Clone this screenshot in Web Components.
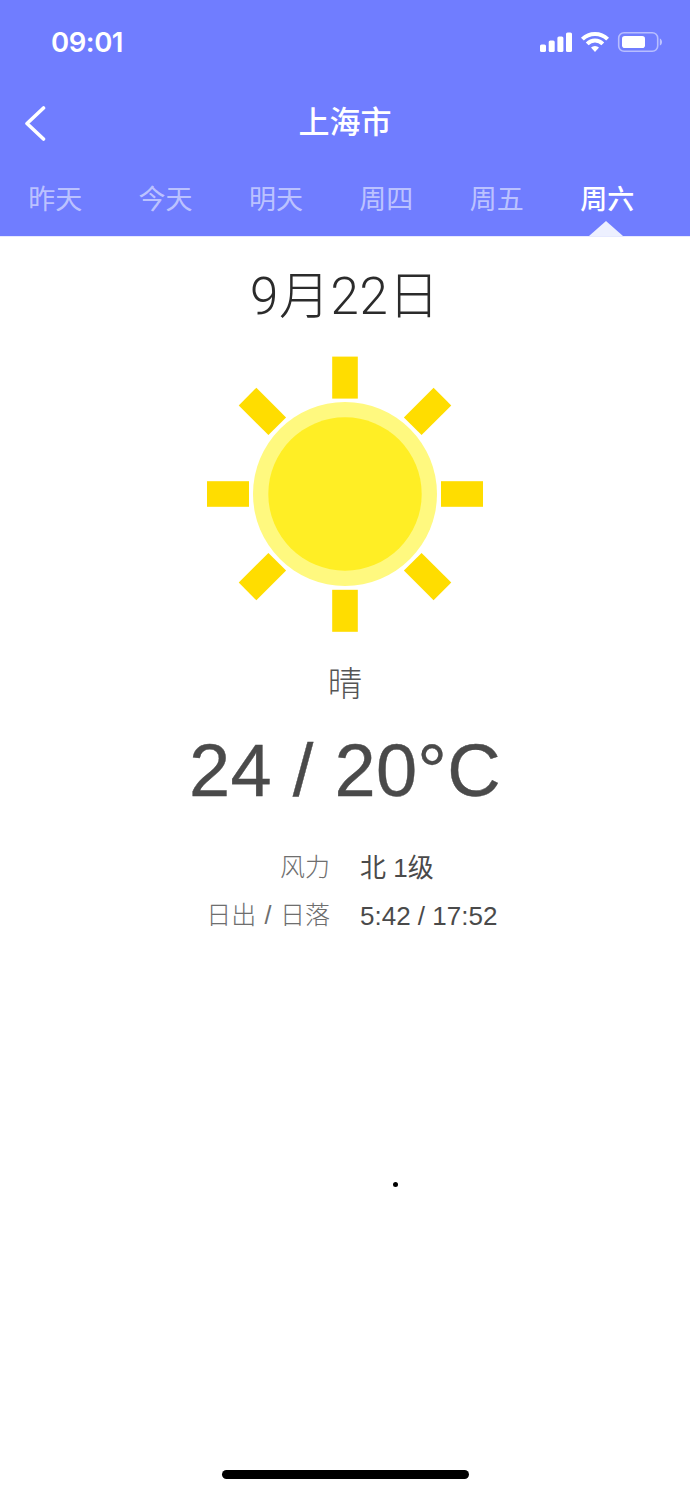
<!DOCTYPE html>
<html lang="zh"><head><meta charset="utf-8"><title>上海市</title>
<style>
html,body{margin:0;padding:0;background:#fff}
body{width:690px;height:1494px;overflow:hidden;font-family:"Liberation Sans","Noto Sans CJK SC",sans-serif}
</style></head>
<body>
<weather-screen>
  <weather-header city="上海市" slot="header">
    <day-tab>昨天</day-tab><day-tab>今天</day-tab><day-tab>明天</day-tab><day-tab>周四</day-tab><day-tab>周五</day-tab><day-tab active>周六</day-tab>
  </weather-header>
  <day-detail date="9月22日" cond="晴" temp="24 / 20°C">
    <detail-row label="风力" value="北 1级"></detail-row>
    <detail-row label="日出 / 日落" value="5:42 / 17:52"></detail-row>
  </day-detail>
</weather-screen>
<script>
function def(name, html, init){
  customElements.define(name, class extends HTMLElement{
    constructor(){super();this.attachShadow({mode:'open'}).innerHTML=html;}
    connectedCallback(){init&&init(this,this.shadowRoot);}
  });
}
const CJK='"Liberation Sans","Noto Sans CJK SC",sans-serif';
def('weather-screen',`<style>:host{display:flex;flex-direction:column;width:690px;height:1494px;background:#fff}
.stray{width:5px;height:5px;border-radius:50%;background:#000;margin:242px 0 0 393px}
.spacer{flex:1}
.home{align-self:center;width:247px;height:9px;border-radius:5px;background:#000;margin-bottom:15px}
</style><slot name="header"></slot><slot></slot><div class="stray"></div><div class="spacer"></div><div class="home"></div>`);
def('status-bar',`<style>:host{display:flex;align-items:center;justify-content:space-between;height:84px;padding:0 28px 0 51px;box-sizing:border-box;color:#fff}
.t{font:600 27.5px/1 Inter,"Liberation Sans",sans-serif;letter-spacing:-.45px;margin-top:2px}
svg{display:block}
</style><span class="t">09:01</span>
<svg width="122" height="22" viewBox="0 0 122 22" fill="#fff">
<rect x="0" y="13.5" width="6" height="7.5" rx="1.6"/><rect x="8.7" y="9.5" width="6" height="11.5" rx="1.6"/><rect x="17.4" y="5.5" width="6" height="15.5" rx="1.6"/><rect x="26" y="1.5" width="6" height="19.5" rx="1.6"/>
<g fill="none" stroke="#fff" stroke-width="4"><path d="M42.4 8.2a17.8 17.8 0 0 1 25.2 0"/><path d="M47.2 12.8a11 11 0 0 1 15.6 0"/></g>
<path d="M51 16.6a5.6 5.6 0 0 1 8 0L55 21z"/>
<rect x="78.7" y="1.7" width="39" height="18.6" rx="5.4" fill="none" stroke="#fff" stroke-opacity=".5" stroke-width="1.6"/>
<rect x="82" y="5" width="23" height="12" rx="2.8"/>
<path d="M119.8 7.5c1.5.5 2.2 2 2.2 3.5s-.7 3-2.2 3.5z" fill-opacity=".55"/>
</svg>`);
def('nav-bar',`<style>:host{display:flex;align-items:center;justify-content:center;position:relative;height:76px;color:#fff}
.t{font:500 31px/1 ${CJK}}
svg{position:absolute;left:24px;top:22px}
</style><svg width="24" height="36" viewBox="0 0 24 36" fill="none" stroke="#fff" stroke-width="3.6" stroke-linecap="round" stroke-linejoin="round"><path d="M19.5 2 3 17.5 19.5 33"/></svg><span class="t"></span>`);
def('weather-header',`<style>:host{display:block;background:#707dff;height:235.5px;box-shadow:0 1px 0 #e6e9ff}
.tabs{display:grid;grid-template-columns:repeat(6,110.4px);height:75px}
</style><status-bar></status-bar><nav-bar></nav-bar><div class="tabs"><slot></slot></div>`,(h,s)=>{s.querySelector('nav-bar').shadowRoot.querySelector('.t').textContent=h.getAttribute('city')});
def('day-tab',`<style>:host{display:flex;justify-content:center;position:relative;height:75.5px;color:rgba(255,255,255,.55);font:400 27px/1 ${CJK}}
:host([active]){color:#fff;font-weight:500}
span{margin-top:22px;display:block;height:36px;line-height:36px}
:host([active])::after{content:"";position:absolute;left:50%;bottom:0;margin-left:-18.5px;border:solid transparent;border-width:0 17.5px 15px;border-bottom-color:#edf0ff}
</style><span><slot></slot></span>`);
def('sun-icon',`<style>:host{display:block;width:276px;height:276px}svg{display:block}</style>
<svg width="276" height="276" viewBox="-138 -138 276 276">
<g fill="#ffdd00">
<rect x="-12.8" y="-137.4" width="25.6" height="42"/><rect x="-12.8" y="95.8" width="25.6" height="42"/>
<rect x="-138" y="-12.8" width="42" height="25.6"/><rect x="96" y="-12.8" width="42" height="25.6"/>
<g transform="rotate(45)"><rect x="-12.5" y="-137.8" width="25" height="42"/><rect x="-12.5" y="95.8" width="25" height="42"/><rect x="-137.8" y="-12.5" width="42" height="25"/><rect x="95.8" y="-12.5" width="42" height="25"/></g>
</g>
<circle r="92" fill="#fff97f"/><circle r="76.7" fill="#ffee25"/>
</svg>`);
def('day-detail',`<style>:host{display:flex;flex-direction:column;align-items:center}
.date{font:300 51px/62px Roboto,"Noto Sans CJK SC",sans-serif;color:#2b2b2b;margin-top:30px;letter-spacing:.6px}
sun-icon{margin-top:28px}
.cond{font:300 34.5px/44px ${CJK};color:#555;margin-top:30px}
.temp{font:400 74px/84px ${CJK};color:#4a4a4a;margin-top:23px;letter-spacing:.3px;-webkit-text-stroke:.4px #4a4a4a}
.rows{display:flex;flex-direction:column;align-self:stretch;margin-top:31px}
</style><div class="date"></div><sun-icon></sun-icon><div class="cond"></div><div class="temp"></div><div class="rows"><slot></slot></div>`,(h,s)=>{for(const k of['date','cond','temp'])s.querySelector('.'+k).textContent=h.getAttribute(k)});
def('detail-row',`<style>:host{display:grid;grid-template-columns:330px auto;column-gap:30px;height:48px;align-items:center}
.l{text-align:right;color:#6e6e6e;font:300 25px/1 ${CJK};word-spacing:1.5px}
.v{color:#4a4a4a;font:400 26px/1 ${CJK}}
</style><span class="l"></span><span class="v"></span>`,(h,s)=>{s.querySelector('.l').textContent=h.getAttribute('label');s.querySelector('.v').textContent=h.getAttribute('value')});
</script>
</body></html>
